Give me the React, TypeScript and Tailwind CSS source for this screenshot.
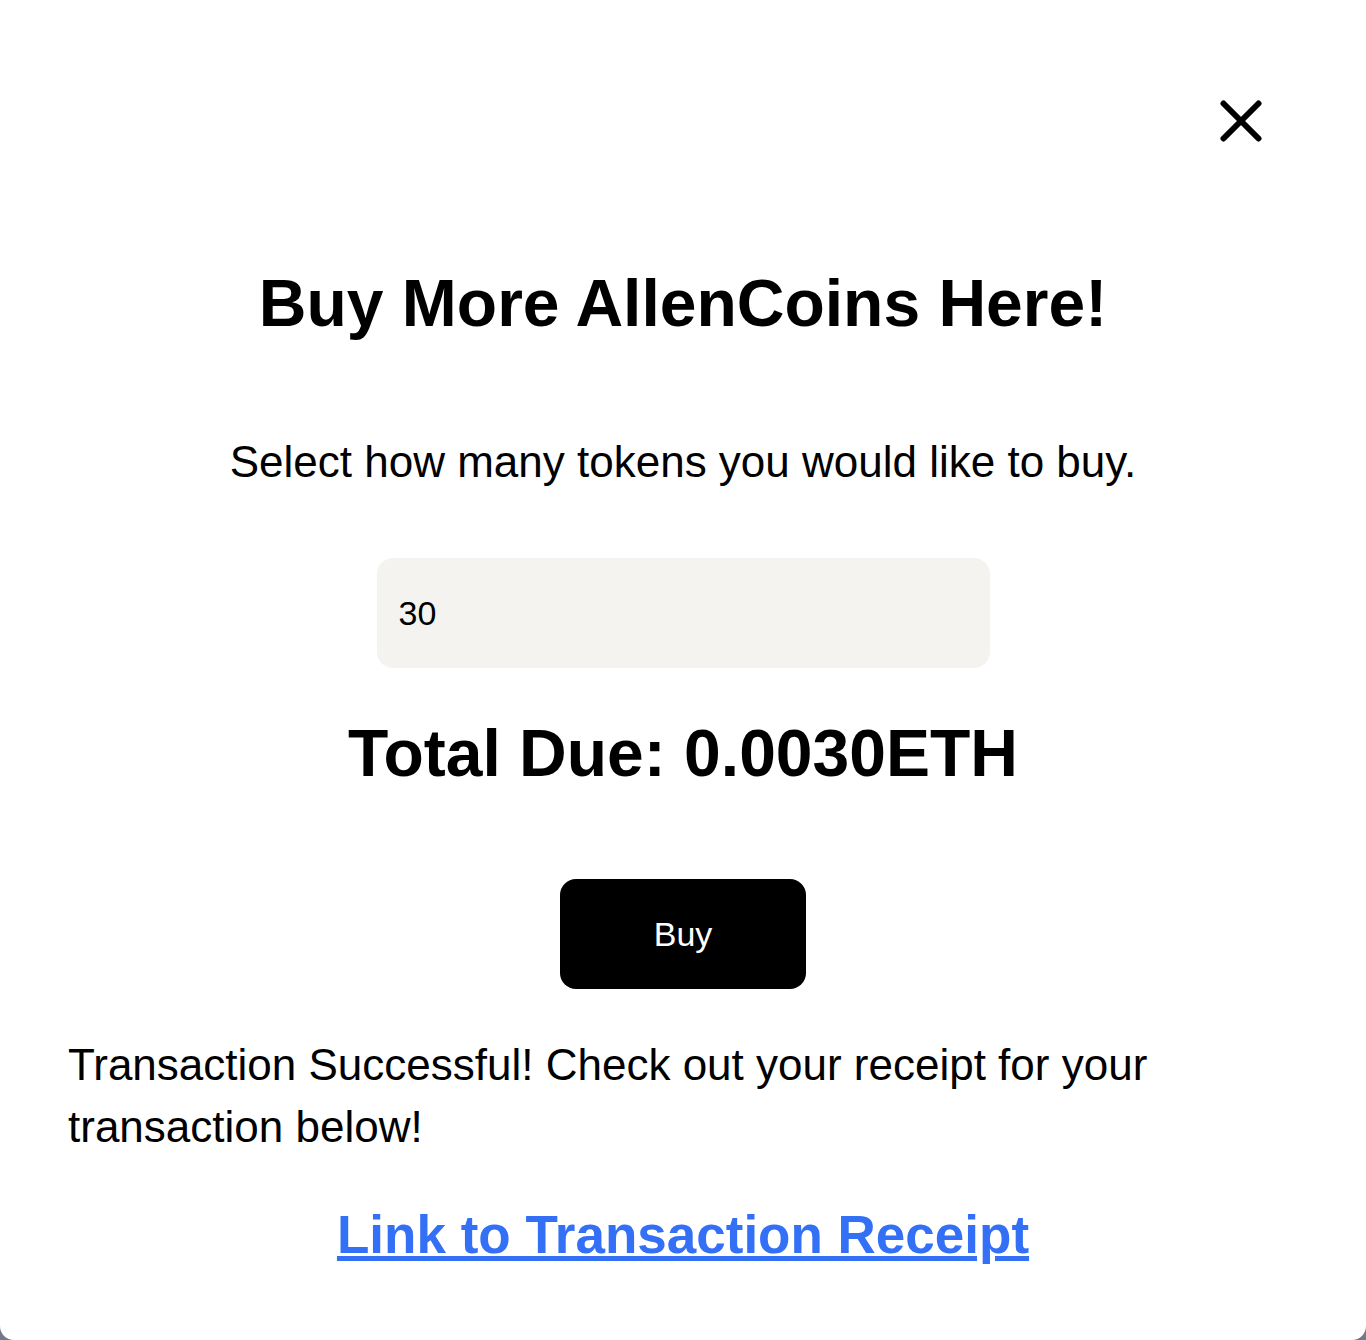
import React, { useState } from 'react';

const PRICE_PER_TOKEN = 0.0001;

export default function App() {
    const [amount, setAmount] = useState('30');
    const total = (Number(amount || 0) * PRICE_PER_TOKEN).toFixed(4);

    return (
        <div className="min-h-[1340px] bg-[#747786]" style={{ fontFamily: '"Liberation Sans", Arial, Helvetica, sans-serif' }}>
            <div className="w-full h-[1340px] bg-white rounded-b-[14px] px-[68px] text-black flex flex-col">
                {/* Close button */}
                <div className="flex justify-end pt-[100px]">
                    <button className="w-[42px] h-[42px] mr-[36px]" aria-label="Close">
                        <svg viewBox="0 0 42 42" className="w-[42px] h-[42px]" fill="none" stroke="#000" strokeWidth="6" strokeLinecap="round">
                            <path d="M3.5 3.5L38.5 38.5M38.5 3.5L3.5 38.5" />
                        </svg>
                    </button>
                </div>

                <h1 className="mt-[129px] text-center text-[66px] leading-[64px] font-bold">
                    Buy More AllenCoins Here!
                </h1>

                <p className="mt-[105px] text-center text-[44px] leading-[44px]">
                    Select how many tokens you would like to buy.
                </p>

                <input
                    type="number"
                    value={amount}
                    onChange={(e) => setAmount(e.target.value)}
                    className="mt-[74px] mx-auto block w-[613px] h-[110px] rounded-[16px] bg-[#f4f3ef] px-[22px] text-[34px] text-black outline-none [appearance:textfield] [&::-webkit-inner-spin-button]:appearance-none"
                />

                <h2 className="mt-[53px] text-center text-[66px] leading-[64px] font-bold">
                    Total Due: {total}ETH
                </h2>

                <button className="mt-[94px] mx-auto w-[246px] h-[110px] rounded-[16px] bg-black text-white text-[34px]">
                    Buy
                </button>

                <p className="mt-[45px] text-[44px] leading-[62px] pr-[20px]">
                    Transaction Successful! Check out your receipt for your transaction below!
                </p>

                <div className="mt-[51px] text-center">
                    <a href="#" className="text-[53px] leading-[52px] font-bold text-[#3370f6] underline">
                        Link to Transaction Receipt
                    </a>
                </div>
            </div>
        </div>
    );
}
